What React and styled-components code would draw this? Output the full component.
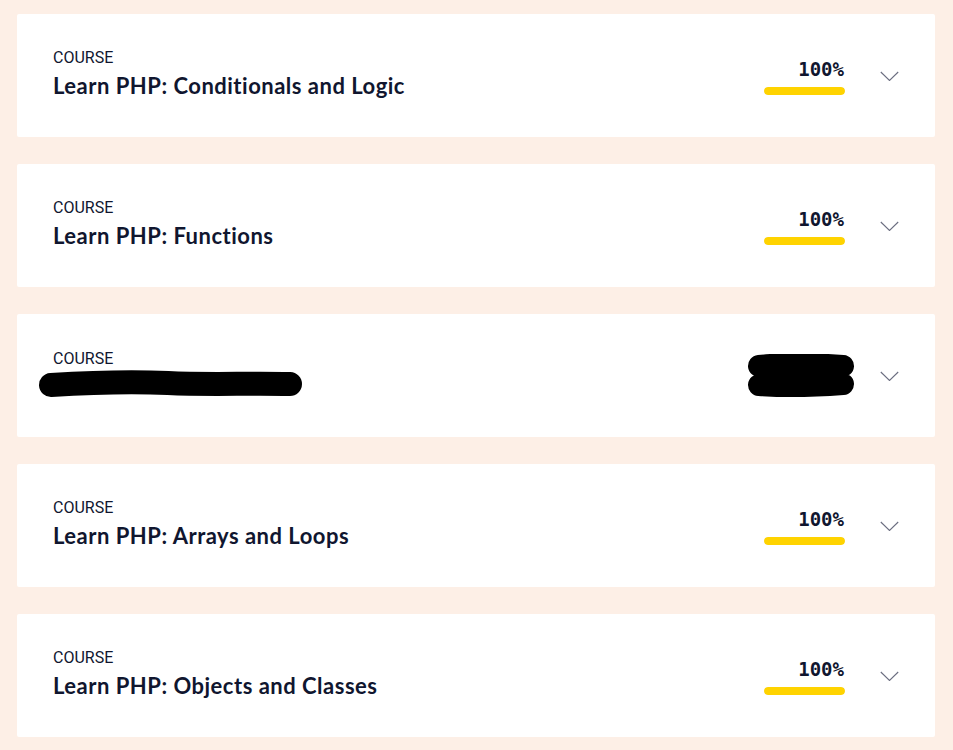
import React from 'react'
import styled, { createGlobalStyle } from 'styled-components'

const GlobalStyle = createGlobalStyle`
  html, body {
    margin: 0;
    background: #fdefe6;
  }
`

const courses = [
  { title: 'Learn PHP: Conditionals and Logic', percent: 100 },
  { title: 'Learn PHP: Functions', percent: 100 },
  { title: null, percent: null },
  { title: 'Learn PHP: Arrays and Loops', percent: 100 },
  { title: 'Learn PHP: Objects and Classes', percent: 100 },
]

const Page = styled.div`
  display: flex;
  flex-direction: column;
  gap: 27px;
  padding: 14px 18px 14px 17px;
  background: #fdefe6;
  min-height: 100vh;
  box-sizing: border-box;
`
const Card = styled.div`
  height: 123px;
  box-sizing: border-box;
  background: #fff;
  border-radius: 2px;
  display: flex;
  align-items: center;
  padding: 0 36px;
  color: #10162f;
`
const Info = styled.div`
  flex: 1;
  display: flex;
  flex-direction: column;
  padding-bottom: 4px;
`
const Label = styled.div`
  font-family: Roboto, sans-serif;
  font-size: 16px;
  font-weight: 400;
  line-height: 20px;
`
const Title = styled.div`
  font-family: Lato, sans-serif;
  font-size: 22px;
  font-weight: 700;
  line-height: 26px;
  letter-spacing: 0.5px;
  margin-top: 5px;
`
const Progress = styled.div`
  display: flex;
  flex-direction: column;
  align-items: flex-end;
  margin-top: 2px;
`
const Percent = styled.div`
  font-family: 'DejaVu Sans Mono', monospace;
  font-weight: 700;
  font-size: 19px;
  line-height: 20px;
  margin-right: 1px;
`
const Bar = styled.div`
  width: 81px;
  height: 8px;
  border-radius: 4px;
  background: #eee;
  margin-top: 8px;
  overflow: hidden;
`
const Fill = styled.div`
  height: 100%;
  background: #ffd300;
  border-radius: 4px;
`
const Chevron = styled.svg`
  width: 19px;
  height: 10px;
  margin-left: 35px;
  flex: none;
`
const TitleScribble = styled.svg`
  display: block;
  margin: 1px 0 0 -15px;
`
const ProgressScribble = styled.svg`
  display: block;
  margin-right: -10px;
`

const ChevronIcon = () => (
  <Chevron viewBox="0 0 19 10">
    <path d="M0.8 1 L9.5 9.5 L18.2 1" fill="none" stroke="#6b6e80" strokeWidth="1.1" />
  </Chevron>
)

const CourseCard = ({ title, percent }) => (
  <Card>
    <Info>
      <Label>COURSE</Label>
      {title ? (
        <Title>{title}</Title>
      ) : (
        <TitleScribble width="266" height="28" viewBox="0 0 266 28">
          <path
            d="M13 15 C60 12 90 11 130 13 C170 15 210 13 252 14"
            fill="none"
            stroke="#000"
            strokeWidth="24"
            strokeLinecap="round"
          />
        </TitleScribble>
      )}
    </Info>
    {percent !== null ? (
      <Progress>
        <Percent>{percent}%</Percent>
        <Bar>
          <Fill style={{ width: `${percent}%` }} />
        </Bar>
      </Progress>
    ) : (
      <ProgressScribble width="108" height="44" viewBox="0 0 108 44">
        <path
          d="M12 12 C40 9 70 10 96 12 M12 31 C40 33 70 32 96 30"
          fill="none"
          stroke="#000"
          strokeWidth="22"
          strokeLinecap="round"
        />
      </ProgressScribble>
    )}
    <ChevronIcon />
  </Card>
)

const App = () => (
  <Page>
    <GlobalStyle />
    {courses.map((c, i) => (
      <CourseCard key={i} title={c.title} percent={c.percent} />
    ))}
  </Page>
)

export default App
